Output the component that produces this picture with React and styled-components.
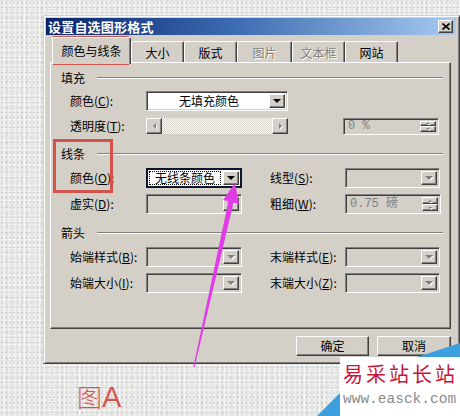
import React from 'react';
import styled, { createGlobalStyle, css } from 'styled-components';

const FACE = '#d4d0c8';
const SHADOW = '#808080';
const DARK = '#404040';
const UI_FONT = `"Noto Sans CJK SC", "Liberation Sans", sans-serif`;

const GlobalStyle = createGlobalStyle`
  html, body {
    margin: 0;
    padding: 0;
  }
  body {
    font-family: ${UI_FONT};
  }
`;

const raised = css`
  border: 1px solid;
  border-color: #fff ${DARK} ${DARK} #fff;
  box-shadow: inset -1px -1px 0 ${SHADOW};
`;

const sunken = css`
  border: 1px solid;
  border-color: ${SHADOW} #fff #fff ${SHADOW};
  box-shadow: inset 1px 1px 0 ${DARK}, inset -1px -1px 0 ${FACE};
`;

const Stage = styled.div`
  position: relative;
  width: 460px;
  height: 416px;
  overflow: hidden;
  box-sizing: border-box;
  padding: 15px 0 0 43px;
  display: flex;
  flex-direction: column;
  background-color: #e7e7e6;
  background-image:
    radial-gradient(circle, rgba(120, 120, 120, 0.22) 0.7px, transparent 1.2px),
    radial-gradient(circle, rgba(255, 255, 255, 0.9) 0.8px, transparent 1.3px),
    radial-gradient(circle, rgba(150, 150, 150, 0.18) 1px, transparent 1.6px);
  background-size: 4px 5px, 5px 3px, 7px 9px;
  background-position: 0 0, 2px 1px, 3px 4px;
`;

const Dialog = styled.div`
  box-sizing: border-box;
  width: 417px;
  height: 349px;
  background: ${FACE};
  border: 1px solid;
  border-color: ${FACE} ${DARK} ${DARK} ${FACE};
  box-shadow: inset 1px 1px 0 #fff, inset -1px -1px 0 ${SHADOW};
  padding: 2px 3px 0 2px;
  display: flex;
  flex-direction: column;
  font: 12px/14px ${UI_FONT};
  color: #000;
`;

const TitleBar = styled.div`
  height: 17px;
  display: flex;
  align-items: center;
  justify-content: space-between;
  padding: 0 3px 0 2px;
  background: linear-gradient(to right, #0a246a, #3a6ab0 45%, #a6caf0);
`;

const Title = styled.span`
  color: #fff;
  font-weight: bold;
  font-size: 13px;
  line-height: 17px;
  letter-spacing: 0.2px;
`;

const CloseButton = styled.div`
  ${raised};
  box-sizing: border-box;
  width: 15px;
  height: 13px;
  background: ${FACE};
  display: flex;
  align-items: center;
  justify-content: center;
`;

const TabStrip = styled.div`
  position: relative;
  z-index: 1;
  height: 25px;
  margin-top: 2px;
  padding-left: 6px;
  display: flex;
  align-items: flex-end;
`;

const Tab = styled.div`
  box-sizing: border-box;
  width: ${p => p.$w}px;
  height: ${p => (p.$active ? 27 : 21)}px;
  margin-bottom: ${p => (p.$active ? -2 : 0)}px;
  padding-top: ${p => (p.$active ? 0 : 2)}px;
  display: flex;
  align-items: center;
  justify-content: center;
  background: ${FACE};
  border: 1px solid;
  border-bottom: none;
  border-color: #fff ${DARK} transparent #fff;
  border-radius: 2px 2px 0 0;
  box-shadow: inset -1px 0 0 ${SHADOW};
  color: ${p => (p.$disabled ? SHADOW : '#000')};
  text-shadow: ${p => (p.$disabled ? '1px 1px 0 #fff' : 'none')};
`;

const Panel = styled.div`
  box-sizing: border-box;
  width: 401px;
  height: 267px;
  margin-left: 4px;
  padding: 1px 7px 0 1px;
  border: 1px solid;
  border-color: #fff ${DARK} ${DARK} #fff;
  box-shadow: inset -1px -1px 0 ${SHADOW};
  display: flex;
  flex-direction: column;
`;

const Heading = styled.div`
  height: 16px;
  margin-top: ${p => p.$gap}px;
  padding-left: 9px;
  display: flex;
  align-items: center;
  gap: 12px;
`;

const HeadingRule = styled.div`
  flex: 1;
  border-top: 1px solid ${SHADOW};
  border-bottom: 1px solid #fff;
`;

const Row = styled.div`
  height: ${p => p.$h || 20}px;
  margin-top: ${p => p.$gap}px;
  padding-left: 18px;
  display: grid;
  grid-template-columns: 76px 96px 28px 75px 95px;
  align-items: center;
`;

const LabelText = styled.span`
  white-space: nowrap;
  grid-column: ${p => p.$col || 'auto'};
  u {
    text-decoration: underline;
    text-underline-offset: 1px;
  }
`;

const Combo = styled.div`
  box-sizing: border-box;
  width: ${p => p.$w}px;
  height: 20px;
  display: flex;
  background: ${p => (p.$disabled ? FACE : '#fff')};
  grid-column: ${p => p.$col || 'auto'};
  ${p =>
    p.$focus
      ? css`
          border: 2px solid #0c1430;
          padding: 1px 1px 1px 1px;
        `
      : css`
          ${sunken};
          padding: 2px;
        `}
`;

const ComboValue = styled.div`
  flex: 1;
  display: flex;
  align-items: center;
  justify-content: center;
  white-space: nowrap;
`;

const FocusText = styled.div`
  flex: 1;
  margin: 0 2px 0 0;
  display: flex;
  align-items: center;
  justify-content: center;
  outline: 1px dotted #000;
  outline-offset: -1px;
`;

const SmallButton = styled.div`
  ${raised};
  box-sizing: border-box;
  width: ${p => p.$w || 16}px;
  height: ${p => (p.$h ? `${p.$h}px` : 'auto')};
  flex: ${p => (p.$h ? 'none' : '0 0 auto')};
  align-self: stretch;
  background: ${FACE};
  display: flex;
  align-items: center;
  justify-content: center;
`;

const Arrow = styled.span`
  width: 0;
  height: 0;
  border-style: solid;
  ${p => {
    const s = p.$size || 4;
    const c = p.$disabled ? SHADOW : '#000';
    if (p.$dir === 'down')
      return `border-width: ${s}px ${s}px 0 ${s}px; border-color: ${c} transparent transparent transparent;`;
    if (p.$dir === 'up')
      return `border-width: 0 ${s}px ${s}px ${s}px; border-color: transparent transparent ${c} transparent;`;
    if (p.$dir === 'left')
      return `border-width: ${s}px ${s}px ${s}px 0; border-color: transparent ${c} transparent transparent;`;
    return `border-width: ${s}px 0 ${s}px ${s}px; border-color: transparent transparent transparent ${c};`;
  }}
  filter: ${p => (p.$disabled ? 'drop-shadow(1px 1px 0 #fff)' : 'none')};
`;

const ScrollBar = styled.div`
  box-sizing: border-box;
  width: 142px;
  height: 16px;
  grid-column: 2 / span 3;
  display: flex;
  background: repeating-conic-gradient(#fff 0 25%, ${FACE} 0 50%) 0 0 / 2px 2px;
`;

const Track = styled.div`
  flex: 1;
`;

const Spin = styled.div`
  ${sunken};
  box-sizing: border-box;
  width: 96px;
  height: ${p => p.$h}px;
  margin-left: ${p => p.$shift || 0}px;
  grid-column: 5;
  padding: 2px;
  display: flex;
  background: ${FACE};
`;

const SpinValue = styled.div`
  flex: 1;
  padding-left: 2px;
  display: flex;
  align-items: center;
  color: ${SHADOW};
  font-family: "Liberation Mono", ${UI_FONT};
  white-space: nowrap;
`;

const SpinButtons = styled.div`
  display: flex;
  flex-direction: column;
`;

const SpinButton = styled(SmallButton)`
  flex: 1;
`;

const ButtonRow = styled.div`
  margin-top: 7px;
  padding-right: 5px;
  display: flex;
  justify-content: flex-end;
  gap: 8px;
`;

const PushButton = styled.div`
  ${raised};
  box-sizing: border-box;
  width: ${p => p.$w}px;
  height: 20px;
  background: ${FACE};
  display: flex;
  align-items: center;
  justify-content: center;
`;

const Caption = styled.div`
  margin: 14px 0 0 34px;
  display: flex;
  align-items: baseline;
  color: #d4574e;
  line-height: 30px;
`;

const CaptionHan = styled.span`
  font: 300 25px ${UI_FONT};
`;

const CaptionLatin = styled.span`
  font: 29px "Liberation Sans", Arial, sans-serif;
`;

const Mark = styled.div`
  position: absolute;
  left: ${p => p.$x}px;
  top: ${p => p.$y}px;
  width: ${p => p.$w}px;
  height: ${p => p.$h}px;
  box-sizing: border-box;
  border: 3px solid #d2524c;
  pointer-events: none;
`;

const Overlay = styled.svg`
  position: absolute;
  left: 0;
  top: 0;
  pointer-events: none;
`;

const Watermark = styled.div`
  position: absolute;
  left: 317px;
  top: 343px;
  width: 143px;
  height: 73px;
  box-sizing: border-box;
  padding: 14px 0 0 23px;
  display: flex;
`;

const WatermarkShape = styled.svg`
  position: absolute;
  left: 0;
  top: 0;
`;

const WatermarkCard = styled.div`
  position: relative;
  flex: 1;
  background: #fff;
  padding: 6px 0 0 3px;
  display: flex;
  flex-direction: column;
`;

const BrandName = styled.div`
  font: 20px/22px ${UI_FONT};
  letter-spacing: 3px;
  color: #c8163a;
  white-space: nowrap;
`;

const BrandUrl = styled.div`
  margin-top: 7px;
  font: 14.5px/14px "Liberation Mono", monospace;
  color: #8c8c8c;
  white-space: nowrap;
`;

const Label = ({ text, k, col }) => (
  <LabelText $col={col}>
    {text}(<u>{k}</u>):
  </LabelText>
);

const DropDown = ({ w, value, disabled, focus, col }) => (
  <Combo $w={w} $disabled={disabled} $focus={focus} $col={col}>
    {focus ? <FocusText>{value}</FocusText> : <ComboValue>{value}</ComboValue>}
    <SmallButton>
      <Arrow $dir="down" $disabled={disabled} />
    </SmallButton>
  </Combo>
);

const SpinBox = ({ value, h, shift }) => (
  <Spin $h={h} $shift={shift}>
    <SpinValue>{value}</SpinValue>
    <SpinButtons>
      <SpinButton>
        <Arrow $dir="up" $size={2} $disabled />
      </SpinButton>
      <SpinButton>
        <Arrow $dir="down" $size={2} $disabled />
      </SpinButton>
    </SpinButtons>
  </Spin>
);

const tabs = [
  { label: '颜色与线条', w: 79, active: true },
  { label: '大小', w: 53 },
  { label: '版式', w: 53 },
  { label: '图片', w: 55, disabled: true },
  { label: '文本框', w: 53, disabled: true },
  { label: '网站', w: 53 },
];

const App = () => {
  return (
    <Stage>
      <GlobalStyle />
      <Dialog>
        <TitleBar>
          <Title>设置自选图形格式</Title>
          <CloseButton>
            <svg width="8" height="7" viewBox="0 0 8 7">
              <path d="M0.5 0.5 L7.5 6.5 M7.5 0.5 L0.5 6.5" stroke="#000" strokeWidth="1.6" />
            </svg>
          </CloseButton>
        </TitleBar>

        <TabStrip>
          {tabs.map(t => (
            <Tab key={t.label} $w={t.w} $active={t.active} $disabled={t.disabled}>
              {t.label}
            </Tab>
          ))}
        </TabStrip>

        <Panel>
          <Heading $gap={6}>
            填充
            <HeadingRule />
          </Heading>
          <Row $gap={5}>
            <Label text="颜色" k="C" />
            <DropDown w={142} value="无填充颜色" col="2 / span 3" />
          </Row>
          <Row $gap={6} $h={18}>
            <Label text="透明度" k="T" />
            <ScrollBar>
              <SmallButton>
                <Arrow $dir="left" $size={3} $disabled />
              </SmallButton>
              <Track />
              <SmallButton>
                <Arrow $dir="right" $size={3} $disabled />
              </SmallButton>
            </ScrollBar>
            <SpinBox value="0 %" h={17} shift={-2} />
          </Row>

          <Heading $gap={11}>
            线条
            <HeadingRule />
          </Heading>
          <Row $gap={6}>
            <Label text="颜色" k="O" />
            <DropDown w={96} value="无线条颜色" focus />
            <Label text="线型" k="S" col={4} />
            <DropDown w={95} disabled />
          </Row>
          <Row $gap={6}>
            <Label text="虚实" k="D" />
            <DropDown w={96} disabled />
            <Label text="粗细" k="W" col={4} />
            <SpinBox value="0.75 磅" h={20} />
          </Row>

          <Heading $gap={11}>
            箭头
            <HeadingRule />
          </Heading>
          <Row $gap={6}>
            <Label text="始端样式" k="B" />
            <DropDown w={96} disabled />
            <Label text="末端样式" k="E" col={4} />
            <DropDown w={95} disabled />
          </Row>
          <Row $gap={6}>
            <Label text="始端大小" k="I" />
            <DropDown w={96} disabled />
            <Label text="末端大小" k="Z" col={4} />
            <DropDown w={95} disabled />
          </Row>
        </Panel>

        <ButtonRow>
          <PushButton $w={73}>确定</PushButton>
          <PushButton $w={74}>取消</PushButton>
        </ButtonRow>
      </Dialog>

      <Caption>
        <CaptionHan>图</CaptionHan>
        <CaptionLatin>A</CaptionLatin>
      </Caption>

      <Mark $x={53} $y={36} $w={76} $h={29} />
      <Mark $x={53} $y={139} $w={60} $h={54} />

      <Overlay width="460" height="416" viewBox="0 0 460 416">
        <polygon
          points="235,183 239,204 233.6,202.4 194.6,367 193.4,366.8 228.4,201.2 223,200"
          fill="#e03ce6"
        />
      </Overlay>

      <Watermark>
        <WatermarkShape width="143" height="73" viewBox="0 0 143 73">
          <polygon points="100,14 143,14 143,0" fill="#3d9fe0" />
          <polygon points="0,73 23,73 23,50" fill="#3d9fe0" />
        </WatermarkShape>
        <WatermarkCard>
          <BrandName>易采站长站</BrandName>
          <BrandUrl>www.easck.com</BrandUrl>
        </WatermarkCard>
      </Watermark>
    </Stage>
  );
};

export default App;
